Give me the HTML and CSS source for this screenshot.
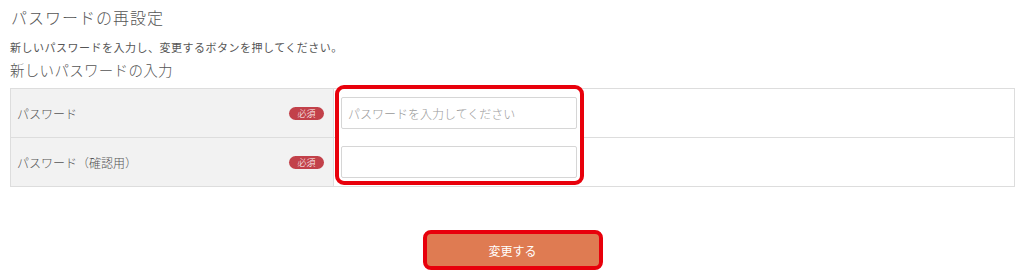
FILE: index.html
```html
<!DOCTYPE html>
<html lang="ja">
<head>
  <meta charset="UTF-8">
  <meta name="viewport" content="width=device-width, initial-scale=1.0">
  <title>パスワードの再設定</title>
  <link rel="stylesheet" href="styles.css">
</head>
<body>
  <div class="container">
    <h2 class="page-title">パスワードの再設定</h2>
    <p class="lead">新しいパスワードを入力し、変更するボタンを押してください。</p>
    <h3 class="section-title">新しいパスワードの入力</h3>

    <div class="form-table">
      <div class="label-cell">
        <span>パスワード</span>
        <span class="required">必須</span>
      </div>
      <div class="input-cell">
        <div class="highlight">
          <input type="password" class="text-input" placeholder="パスワードを入力してください">
          <input type="password" class="text-input">
        </div>
      </div>
      <div class="label-cell last">
        <span>パスワード（確認用）</span>
        <span class="required">必須</span>
      </div>
    </div>

    <div class="actions">
      <button class="btn-submit" type="button">変更する</button>
    </div>
  </div>
</body>
</html>
```

FILE: styles.css
```css
body {
  margin: 0;
  font-family: "Noto Sans CJK JP", "Noto Sans", sans-serif;
  color: #444;
  background: #fff;
}

.container {
  width: 1005px;
  padding-left: 10px;
}

.page-title {
  margin: 0;
  height: 34px;
  line-height: 34px;
  padding-left: 1px;
  font-size: 16px;
  font-weight: 300;
  color: #555;
  letter-spacing: 1px;
}

.lead {
  margin: 2px 0 0 0;
  height: 22px;
  line-height: 22px;
  font-size: 11px;
  color: #555;
  letter-spacing: 0.5px;
}

.section-title {
  margin: 0;
  height: 24px;
  line-height: 24px;
  font-size: 14.5px;
  font-weight: 300;
  color: #555;
  letter-spacing: 0.3px;
}

.form-table {
  margin-top: 6px;
  display: grid;
  grid-template-columns: 323px 1fr;
  grid-template-rows: 49px 48px;
  border: 1px solid #ddd;
}

.label-cell {
  display: flex;
  align-items: center;
  justify-content: space-between;
  padding: 0 9px 0 6px;
  background: #f2f2f2;
  border-right: 1px solid #ddd;
  border-bottom: 1px solid #ddd;
  font-size: 12px;
  font-weight: 300;
  color: #555;
}

.label-cell.last {
  border-bottom: none;
}

.required {
  display: inline-block;
  width: 35px;
  height: 13px;
  line-height: 13px;
  border-radius: 7px;
  background: #c2414a;
  color: #fff;
  font-size: 9px;
  text-align: center;
}

.input-cell {
  grid-column: 2;
  grid-row: 1 / 3;
  background: linear-gradient(#ddd, #ddd) no-repeat 0 48px / 100% 1px;
}

.highlight {
  width: 236px;
  margin: -4px 0 0 1px;
  padding: 8px 3px 3px 2px;
  border: 4px solid #e8000b;
  border-radius: 9px;
  background: #fff;
  display: flex;
  flex-direction: column;
  gap: 17px;
}

.text-input {
  box-sizing: border-box;
  width: 236px;
  height: 32px;
  margin: 0;
  padding: 0 6px;
  border: 1px solid #d6d6d6;
  border-radius: 2px;
  font-family: "Noto Sans CJK JP", "Noto Sans", sans-serif;
  font-size: 12px;
  font-weight: 300;
  color: #333;
}

.text-input::placeholder {
  color: #999;
}

.actions {
  display: flex;
  justify-content: center;
  margin-top: 43px;
}

.btn-submit {
  width: 180px;
  height: 40px;
  border: 4px solid #e8000b;
  border-radius: 8px;
  background: #df7b52;
  color: #fff;
  font-family: "Noto Sans CJK JP", "Noto Sans", sans-serif;
  font-size: 12px;
  cursor: pointer;
}
```
